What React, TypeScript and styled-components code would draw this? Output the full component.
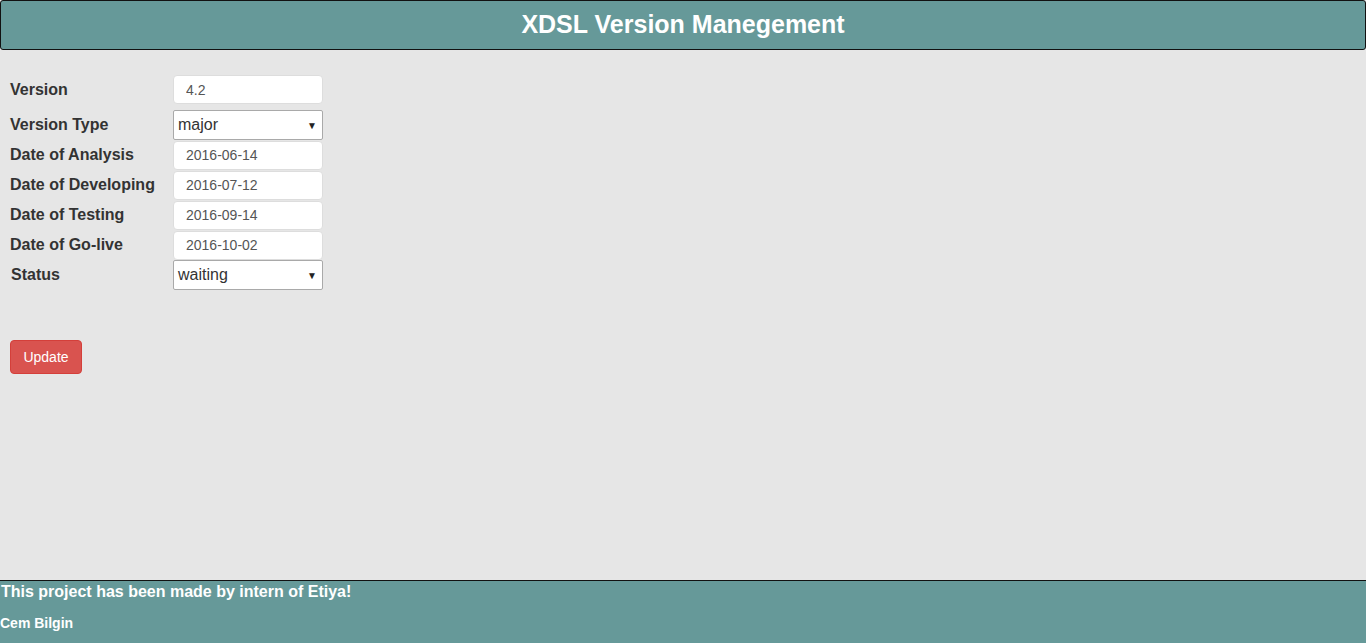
import React from "react";
import styled, { createGlobalStyle } from "styled-components";

const GlobalStyle = createGlobalStyle`
  html, body {
    margin: 0;
    padding: 0;
    background: #e6e6e6;
    font-family: "Liberation Sans", Arial, sans-serif;
  }
`;

const Page = styled.div`
  min-height: 100vh;
  display: flex;
  flex-direction: column;
`;

const Header = styled.header`
  height: 48px;
  background: #669999;
  border: 1px solid #111;
  border-radius: 3px;
  display: flex;
  align-items: center;
  justify-content: center;

  h1 {
    margin: 0;
    color: #fff;
    font-size: 25px;
    font-weight: bold;
    padding-bottom: 2px;
  }
`;

const Main = styled.main`
  flex: 1;
  padding: 25px 10px 0;
`;

const Form = styled.form`
  display: grid;
  grid-template-columns: 163px 150px;
  grid-template-rows: 29px 6px repeat(6, 30px);
  align-items: center;
`;

const Label = styled.label<{ offset?: number }>`
  font-size: 16px;
  font-weight: bold;
  color: #333;
  padding-left: ${(p) => p.offset || 0}px;
`;

const TextInput = styled.input`
  box-sizing: border-box;
  width: 150px;
  height: 29px;
  border: 1px solid #ddd;
  border-radius: 4px;
  background: #fff;
  padding: 0 12px;
  font-family: "Liberation Sans", Arial, sans-serif;
  font-size: 14px;
  color: #555;
  outline: none;
`;

const SelectBox = styled.div`
  box-sizing: border-box;
  width: 150px;
  height: 30px;
  border: 1px solid #a9a9a9;
  border-radius: 2px;
  background: #fff;
  display: flex;
  align-items: center;
  justify-content: space-between;
  padding: 0 5px 0 4px;
  font-size: 16px;
  color: #333;

  span:last-child {
    font-size: 10px;
    color: #222;
  }
`;

const Spacer = styled.div`
  grid-column: 1 / -1;
`;

const Button = styled.button`
  margin-top: 50px;
  background: #d9534f;
  border: 1px solid #d43f3a;
  border-radius: 4px;
  color: #fff;
  font-family: "Liberation Sans", Arial, sans-serif;
  font-size: 14px;
  width: 72px;
  height: 34px;
  cursor: pointer;
`;

const Footer = styled.footer`
  height: 62px;
  background: #669999;
  border-top: 1px solid #111;
  color: #fff;
  font-weight: bold;

  h4 {
    margin: 2px 0 0 1px;
    font-size: 16px;
  }

  h5 {
    margin: 14px 0 0;
    font-size: 14px;
  }
`;

const rows = [
  { label: "Date of Analysis", value: "2016-06-14" },
  { label: "Date of Developing", value: "2016-07-12" },
  { label: "Date of Testing", value: "2016-09-14" },
  { label: "Date of Go-live", value: "2016-10-02" },
];

const Select: React.FC<{ value: string }> = ({ value }) => (
  <SelectBox>
    <span>{value}</span>
    <span>▼</span>
  </SelectBox>
);

export default function App() {
  return (
    <Page>
      <GlobalStyle />
      <Header>
        <h1>XDSL Version Manegement</h1>
      </Header>
      <Main>
        <Form>
          <Label>Version</Label>
          <TextInput defaultValue="4.2" />
          <Spacer />
          <Label>Version Type</Label>
          <Select value="major" />
          {rows.map((r) => (
            <React.Fragment key={r.label}>
              <Label>{r.label}</Label>
              <TextInput defaultValue={r.value} />
            </React.Fragment>
          ))}
          <Label offset={1}>Status</Label>
          <Select value="waiting" />
        </Form>
        <Button type="button">Update</Button>
      </Main>
      <Footer>
        <h4>This project has been made by intern of Etiya!</h4>
        <h5>Cem Bilgin</h5>
      </Footer>
    </Page>
  );
}
